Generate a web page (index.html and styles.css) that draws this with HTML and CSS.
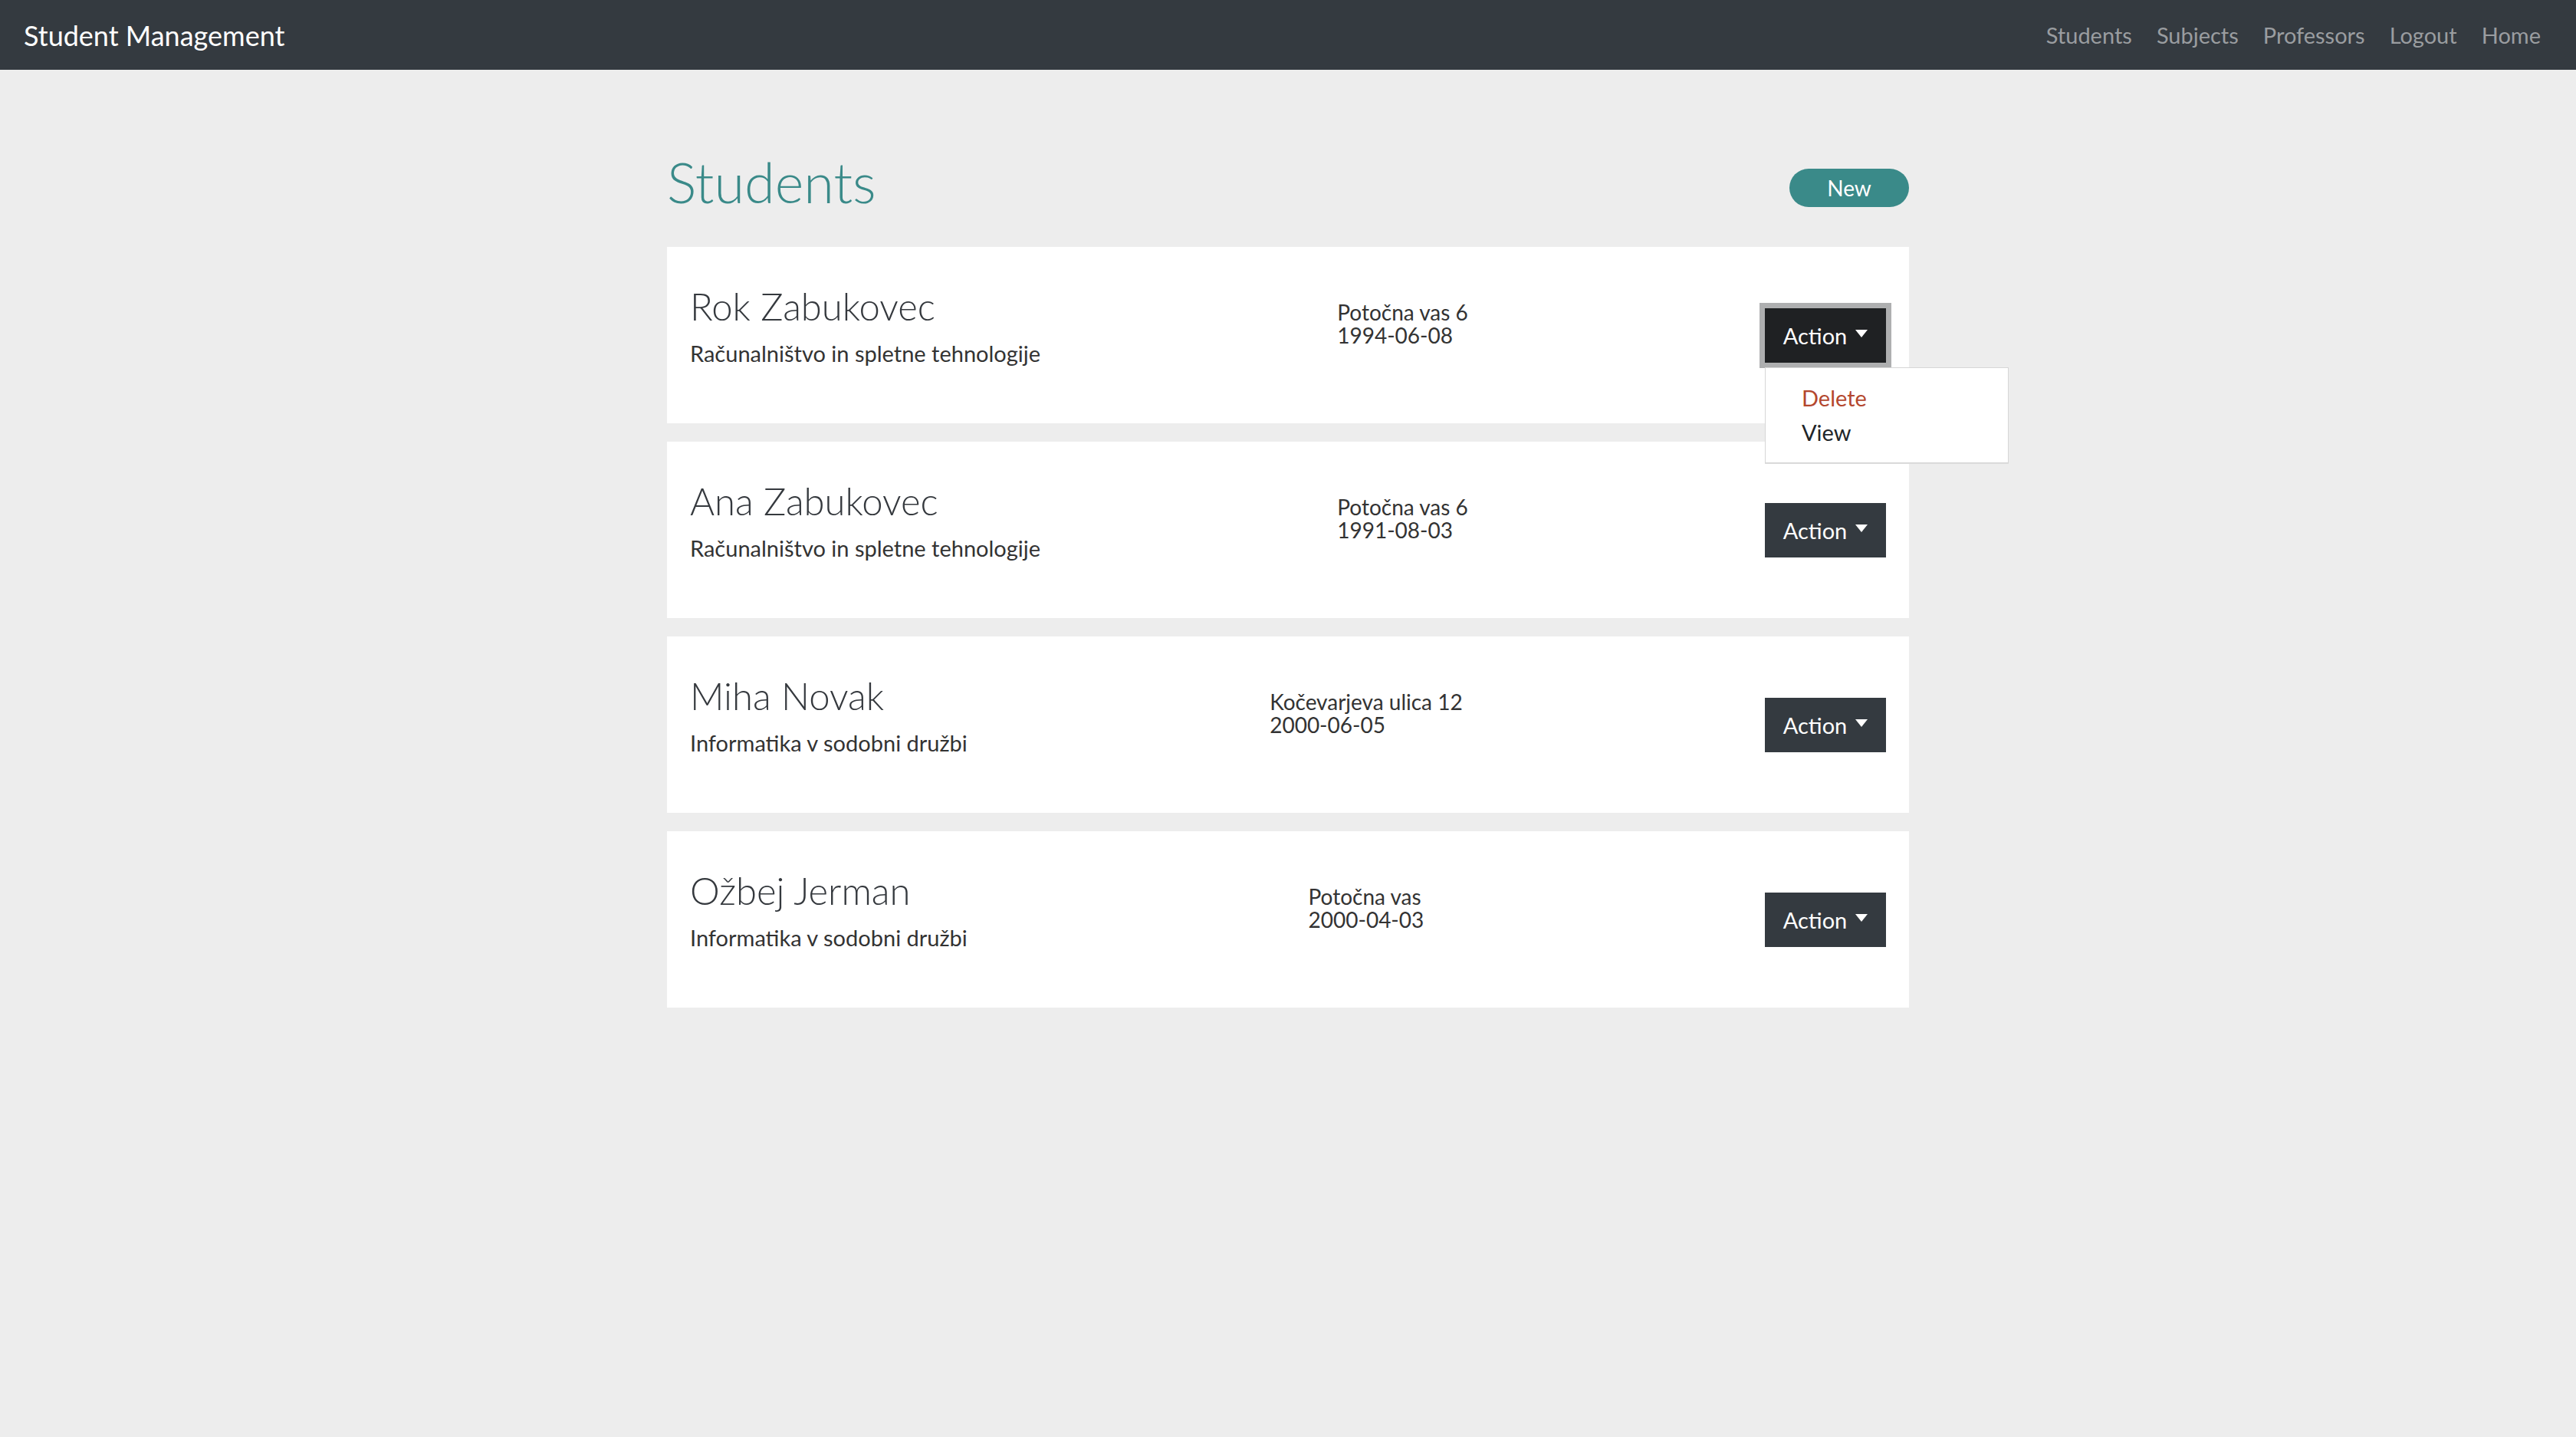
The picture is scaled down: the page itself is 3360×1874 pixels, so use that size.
FILE: index.html
```html
<!DOCTYPE html>
<html lang="sl">
<head>
<meta charset="utf-8">
<title>Student Management</title>
<link rel="stylesheet" href="styles.css">
</head>
<body>
<nav class="navbar">
  <a class="brand" href="#">Student Management</a>
  <ul class="nav-links">
    <li><a href="#">Students</a></li>
    <li><a href="#">Subjects</a></li>
    <li><a href="#">Professors</a></li>
    <li><a href="#">Logout</a></li>
    <li><a href="#">Home</a></li>
  </ul>
</nav>

<main class="container">
  <div class="title-row">
    <h1 class="page-title">Students</h1>
    <button class="btn-new">New</button>
  </div>

  <div class="card-list">
    <div class="card">
      <div class="info">
        <h3 class="name">Rok Zabukovec</h3>
        <p class="program">Računalništvo in spletne tehnologije</p>
      </div>
      <div class="address">
        <div>Potočna vas 6</div>
        <div>1994-06-08</div>
      </div>
      <div class="dropdown">
        <button class="btn-action active">Action<span class="caret"></span></button>
        <div class="menu">
          <a class="menu-item delete" href="#">Delete</a>
          <a class="menu-item" href="#">View</a>
        </div>
      </div>
    </div>

    <div class="card">
      <div class="info">
        <h3 class="name">Ana Zabukovec</h3>
        <p class="program">Računalništvo in spletne tehnologije</p>
      </div>
      <div class="address">
        <div>Potočna vas 6</div>
        <div>1991-08-03</div>
      </div>
      <div class="dropdown">
        <button class="btn-action">Action<span class="caret"></span></button>
      </div>
    </div>

    <div class="card">
      <div class="info">
        <h3 class="name">Miha Novak</h3>
        <p class="program">Informatika v sodobni družbi</p>
      </div>
      <div class="address">
        <div>Kočevarjeva ulica 12</div>
        <div>2000-06-05</div>
      </div>
      <div class="dropdown">
        <button class="btn-action">Action<span class="caret"></span></button>
      </div>
    </div>

    <div class="card">
      <div class="info">
        <h3 class="name">Ožbej Jerman</h3>
        <p class="program">Informatika v sodobni družbi</p>
      </div>
      <div class="address">
        <div>Potočna vas</div>
        <div>2000-04-03</div>
      </div>
      <div class="dropdown">
        <button class="btn-action">Action<span class="caret"></span></button>
      </div>
    </div>
  </div>
</main>
</body>
</html>
```

FILE: styles.css
```css
* { box-sizing: border-box; }

html, body {
  margin: 0;
  padding: 0;
}

body {
  background: #ededed;
  font-family: Lato, "Noto Sans", "Liberation Sans", sans-serif;
  color: #333;
}

a { text-decoration: none; }

.navbar {
  height: 91px;
  background: #343a40;
  display: flex;
  align-items: center;
  justify-content: space-between;
  padding: 0 46px 0 31px;
}

.brand {
  color: #fff;
  font-size: 36px;
  line-height: 44px;
  font-weight: 400;
}

.nav-links {
  list-style: none;
  margin: 0;
  padding: 0;
  display: flex;
  gap: 32px;
}

.nav-links a {
  color: #9a9da0;
  font-size: 29px;
  line-height: 44px;
}

.container {
  width: 1620px;
  margin: 0 auto;
  padding-top: 103px;
}

.title-row {
  display: flex;
  justify-content: space-between;
  align-items: flex-start;
  margin-bottom: 42px;
}

.page-title {
  margin: 0;
  font-size: 72px;
  line-height: 86px;
  font-weight: 300;
  color: #3a8a89;
}

.btn-new {
  margin-top: 26px;
  width: 156px;
  height: 50px;
  border: none;
  border-radius: 25px;
  background: #3a8a89;
  color: #fff;
  font-family: inherit;
  font-size: 28px;
  line-height: 50px;
  padding: 0;
}

.card-list {
  display: flex;
  flex-direction: column;
  gap: 24px;
}

.card {
  background: #fff;
  height: 230px;
  padding: 0 30px;
  display: flex;
  justify-content: space-between;
  align-items: center;
}

.info {
  padding-bottom: 23px;
}

.name {
  margin: 0 0 10px;
  font-size: 49px;
  line-height: 60px;
  font-weight: 300;
  color: #35393e;
}

.program {
  margin: 0;
  font-size: 29px;
  line-height: 44px;
  color: #333;
}

.address {
  font-size: 28px;
  line-height: 30px;
  color: #333;
  padding-bottom: 30px;
}

.dropdown {
  position: relative;
}

.btn-action {
  width: 158px;
  height: 71px;
  border: none;
  border-radius: 0;
  background: #343a40;
  color: #fff;
  font-family: inherit;
  font-size: 29px;
  line-height: 45px;
  padding: 0;
  display: flex;
  align-items: center;
  justify-content: center;
  gap: 11px;
}

.btn-action.active {
  background: #1f2123;
  box-shadow: 0 0 0 7px #aeafb0;
}

.caret {
  width: 0;
  height: 0;
  border-top: 10px solid #fff;
  border-left: 8px solid transparent;
  border-right: 8px solid transparent;
  margin-bottom: 4px;
}

.menu {
  position: absolute;
  top: 77px;
  left: 0;
  width: 318px;
  background: #fff;
  border: 1px solid #d6d6d6;
  box-shadow: 0 1px 0 #dcdcdc;
  padding: 16px 0 17px;
  z-index: 10;
  display: flex;
  flex-direction: column;
}

.menu-item {
  display: block;
  padding: 0 47px;
  font-size: 29px;
  line-height: 45px;
  color: #212529;
}

.menu-item.delete {
  color: #b4472e;
}
```
